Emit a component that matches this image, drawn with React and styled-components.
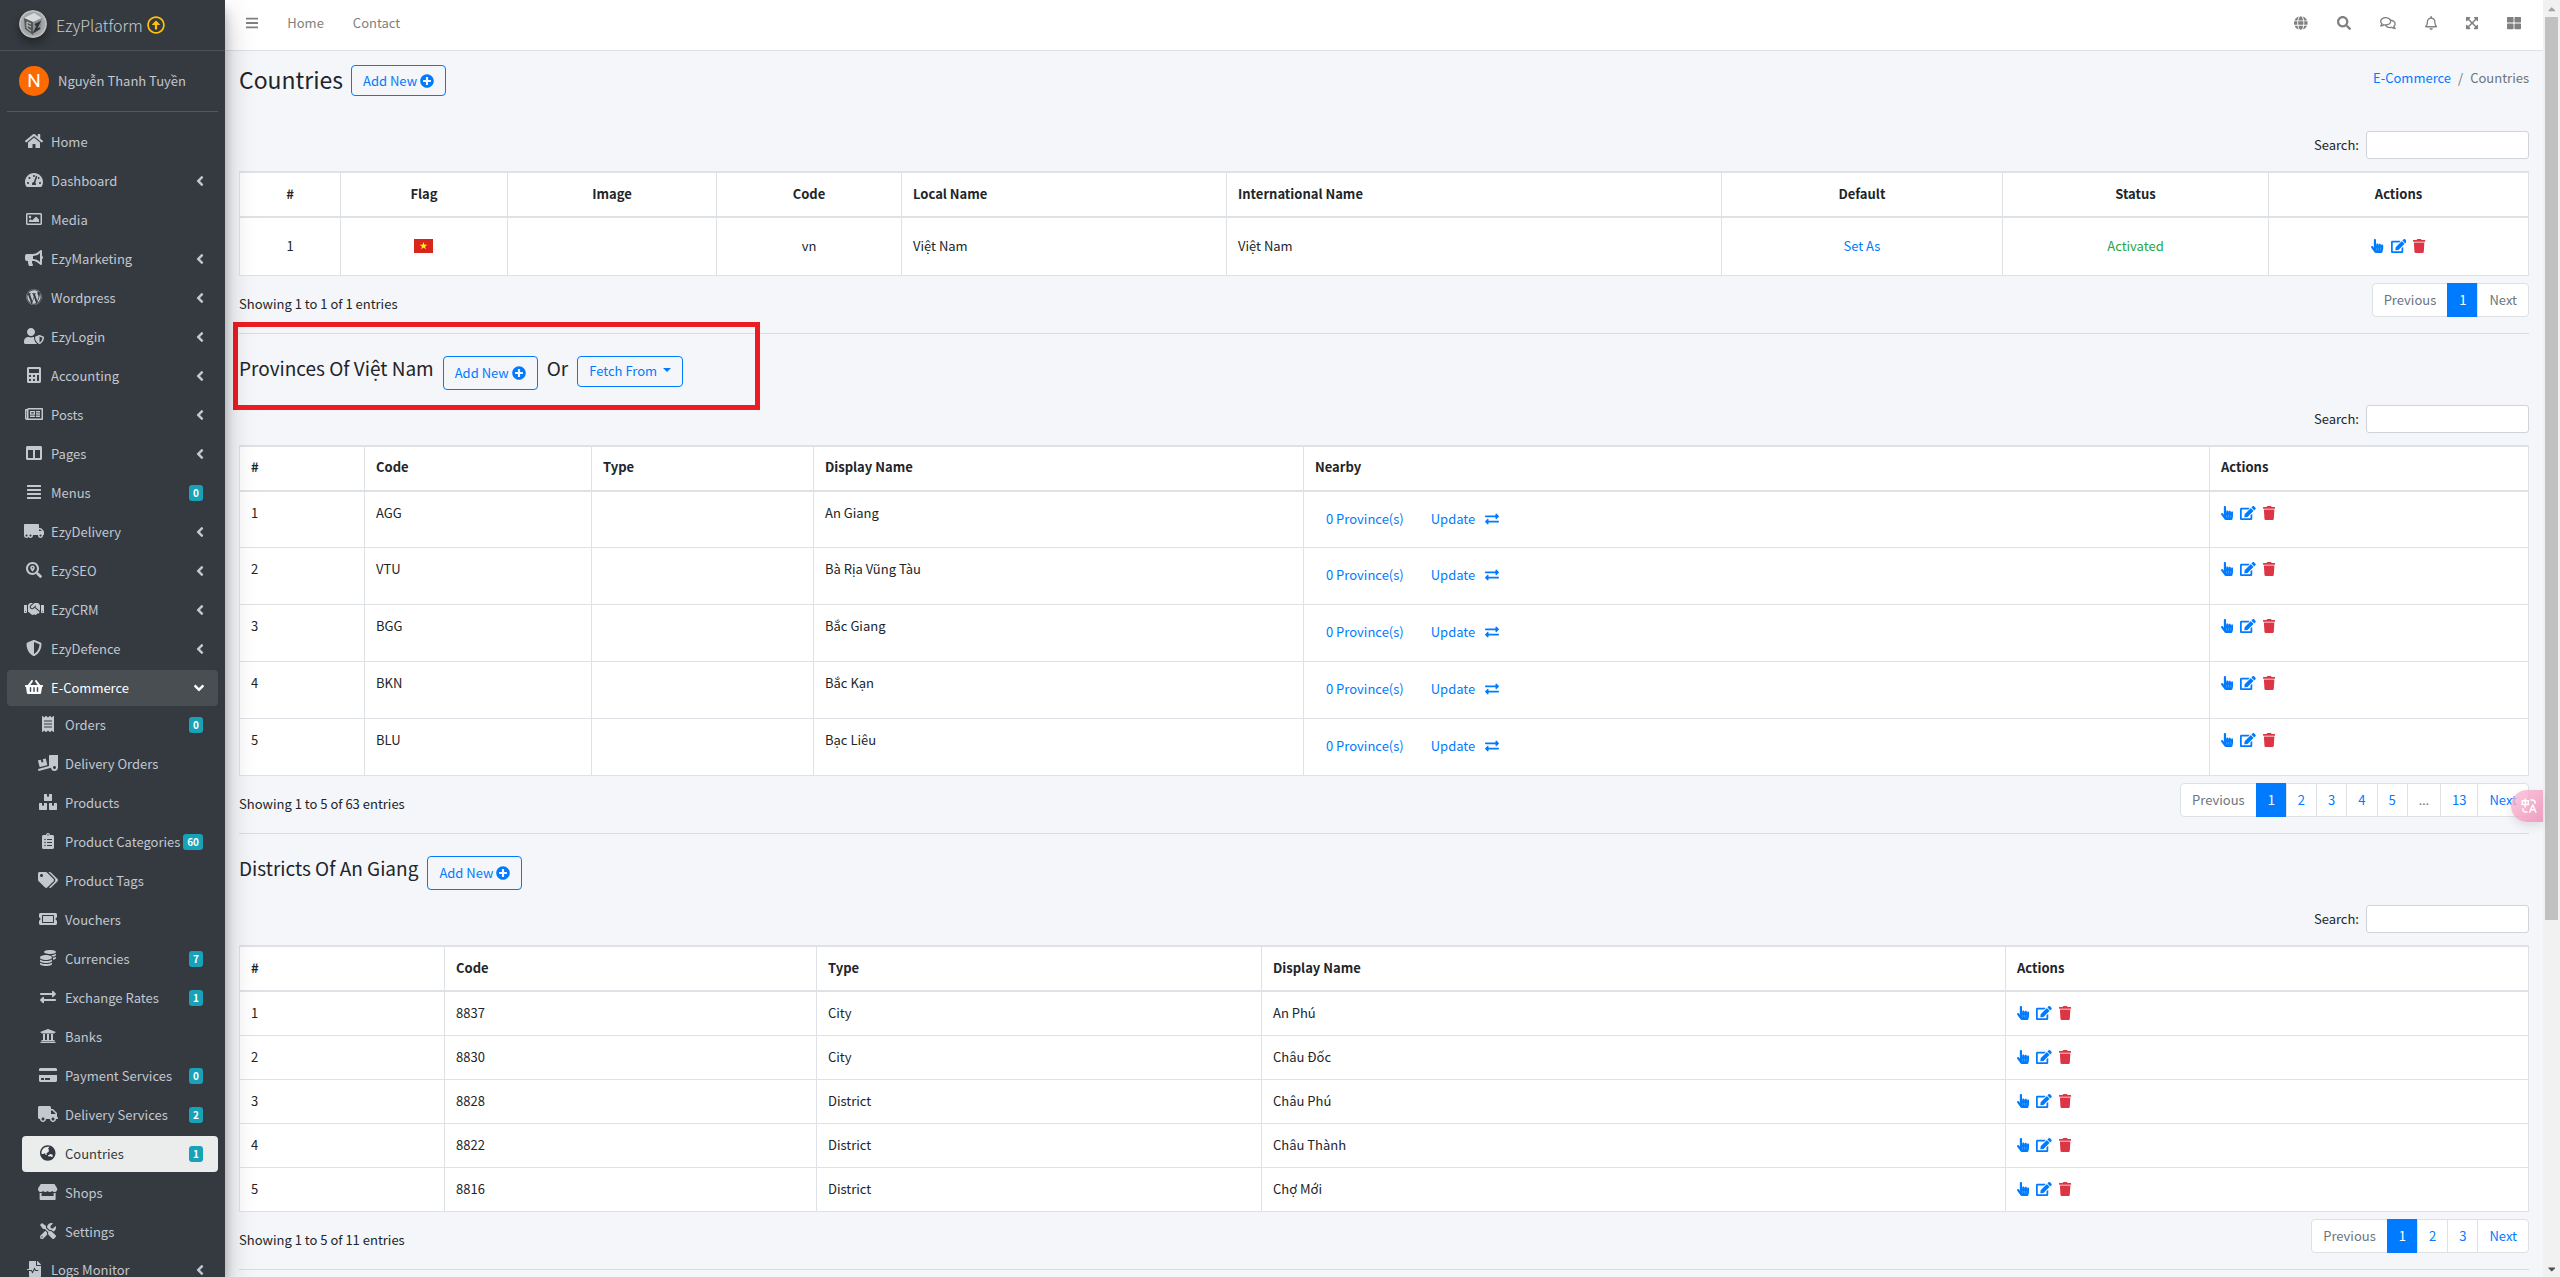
import React from "react";
import styled, { createGlobalStyle, css } from "styled-components";
import { IconContext } from "react-icons";
import {
  FaAlignJustify,
  FaAngleDown,
  FaAngleLeft,
  FaBars,
  FaBoxes,
  FaBullhorn,
  FaCalculator,
  FaCaretDown,
  FaCaretUp,
  FaClipboardList,
  FaCoins,
  FaColumns,
  FaCreditCard,
  FaEdit,
  FaExchangeAlt,
  FaExpandArrowsAlt,
  FaFileMedicalAlt,
  FaGlobe,
  FaGlobeAsia,
  FaHandPointer,
  FaHandshake,
  FaHome,
  FaPlusCircle,
  FaReceipt,
  FaRegArrowAltCircleUp,
  FaRegBell,
  FaRegComments,
  FaRegImage,
  FaRegNewspaper,
  FaSearch,
  FaSearchLocation,
  FaShieldAlt,
  FaShoppingBasket,
  FaStore,
  FaTachometerAlt,
  FaTags,
  FaThLarge,
  FaTicketAlt,
  FaTools,
  FaTrash,
  FaTruck,
  FaTruckLoading,
  FaTruckMoving,
  FaUniversity,
  FaUserShield,
  FaWordpress,
} from "react-icons/fa";
import { RiTranslate } from "react-icons/ri";

const GlobalStyle = createGlobalStyle`
  *, *::before, *::after {
    box-sizing: border-box;
  }

  html, body {
    margin: 0;
    height: 100%;
    overflow: hidden;
  }

  body {
    font-family: "Noto Sans CJK SC", "Noto Sans", sans-serif;
    font-size: 13px;
    line-height: 22px;
    color: #212529;
    background: #f4f6f9;
  }

  a {
    color: #007bff;
    text-decoration: none;
  }

  button, input {
    font: inherit;
  }

  /* wide icons keep their own aspect ratio */
  .icon {
    flex: none;
    width: auto;
    height: 1em;
  }
`;

const Page = styled.div`
  display: flex;
  height: 100vh;
  overflow: hidden;
`;

/* ---------- sidebar ---------- */

const Sidebar = styled.aside`
  position: relative;
  z-index: 2;
  flex: 0 0 225px;
  overflow: hidden;
  background: #343a40;
  box-shadow: 0 14px 28px rgba(0, 0, 0, 0.25), 0 10px 10px rgba(0, 0, 0, 0.22);
`;

const Brand = styled.a`
  display: flex;
  align-items: center;
  height: 51px;
  padding-left: 19px;
  border-bottom: 1px solid #4b545c;
  color: #c9cccf;
  font-size: 16px;
  font-weight: 300;

  svg:first-child {
    margin: 0 9px 3px 0;
    border-radius: 50%;
    box-shadow: 0 5px 9px rgba(0, 0, 0, 0.35);
  }

  svg:last-child {
    margin-left: 4px;
    color: #ffc107;
    font-size: 18px;
  }
`;

const UserPanel = styled.div`
  display: flex;
  align-items: center;
  gap: 9px;
  height: 61px;
  margin: 0 7px 12px;
  padding-left: 12px;
  border-bottom: 1px solid #4f5962;

  a {
    color: #c2c7d0;
  }
`;

const Avatar = styled.span`
  width: 30px;
  height: 30px;
  border-radius: 50%;
  background: #ff6a00;
  color: #fff;
  font-family: Roboto, sans-serif;
  font-size: 19px;
  line-height: 30px;
  text-align: center;
`;

const NavList = styled.ul`
  margin: 0;
  padding: 0 7px;
  list-style: none;
`;

const SubNav = styled.ul`
  margin: -2px 0 -1px;
  padding: 0 0 0 15px;
  list-style: none;
`;

const NavLink = styled.a`
  display: flex;
  align-items: center;
  height: 36px;
  margin-bottom: 3px;
  padding: 0 14px 0 ${(p) => (p.$nested ? "12px" : "13px")};
  border-radius: 4px;
  color: #c2c7d0;
  white-space: nowrap;

  > svg {
    font-size: 16px;
  }

  ${(p) => p.$open && css`
    background: #494e52;
    color: #fff;
  `}

  ${(p) => p.$active && css`
    background: #ebedec;
    color: #343a40;
  `}
`;

const NavIcon = styled.span`
  display: flex;
  justify-content: center;
  flex: 0 0 28px;
  margin-right: 3px;
  padding-bottom: 2px;
  font-size: 16px;
`;

const NavText = styled.span`
  flex: 1;
`;

const Badge = styled.span`
  min-width: 14px;
  height: 16px;
  margin-right: 1px;
  padding: 0 4px;
  border-radius: 3px;
  background: #17a2b8;
  color: #fff;
  font-size: 10px;
  font-weight: 700;
  line-height: 16px;
`;

/* ---------- main area ---------- */

const Main = styled.div`
  flex: 1;
  min-width: 0;
`;

const Topbar = styled.header`
  display: flex;
  align-items: center;
  justify-content: space-between;
  height: 51px;
  padding: 0 22px 4px 21px;
  border-bottom: 1px solid #dee2e6;
  background: #fff;
`;

const TopLinks = styled.nav`
  display: flex;
  align-items: center;
  gap: 29px;

  a {
    display: flex;
    color: #808080;
  }

  svg {
    font-size: 14px;
  }
`;

const Content = styled.main`
  padding: 0 14px;
`;

const TitleRow = styled.div`
  display: flex;
  align-items: center;
  justify-content: space-between;
  height: 59px;
  margin-bottom: 21px;
`;

const Heading = styled.div`
  display: flex;
  align-items: center;
  gap: 8px;
`;

const PageTitle = styled.h1`
  margin: 0 0 3px;
  font-size: 23px;
  font-weight: 400;
  line-height: 30px;
`;

const SectionHead = styled.div`
  display: flex;
  align-items: flex-start;
  gap: 9px;
  height: 71px;
  padding-top: 22px;
`;

const SectionTitle = styled.h2`
  margin: 0;
  font-size: 19px;
  font-weight: 400;
  line-height: 24px;
`;

const OutlineButton = styled.button`
  display: flex;
  align-items: center;
  gap: 3px;
  height: ${(p) => (p.$tall ? "34px" : "31px")};
  padding: 0 11px;
  border: 1px solid #007bff;
  border-radius: 4px;
  background: transparent;
  color: #007bff;
  cursor: pointer;

  svg {
    font-size: 14px;
  }
`;

const Caret = styled.i`
  margin: 0 0 3px 3px;
  border-top: 4px solid currentColor;
  border-right: 4px solid transparent;
  border-left: 4px solid transparent;
`;

const Breadcrumb = styled.nav`
  display: flex;
  gap: 7px;
  padding-bottom: 5px;
  color: #6c757d;
`;

const SearchRow = styled.label`
  display: flex;
  align-items: center;
  justify-content: flex-end;
  gap: 7px;
  margin-bottom: 12px;
`;

const SearchInput = styled.input`
  width: 163px;
  height: 28px;
  padding: 3px 7px;
  border: 1px solid #ced4da;
  border-radius: 3px;
  background: #fff;
`;

const Table = styled.table`
  width: 100%;
  table-layout: fixed;
  border-collapse: collapse;
  background: #fff;

  th, td {
    height: ${(p) => p.$rowHeight}px;
    padding: 10px 11px 11px;
    border: 1px solid #dee2e6;
    text-align: left;
    vertical-align: ${(p) => (p.$middle ? "middle" : "top")};
  }

  th {
    height: 45px;
    padding: 9px 11px 11px;
    border-top-width: 2px;
    border-bottom-width: 2px;
    font-weight: 700;
    vertical-align: middle;
  }

  th.center, td.center {
    text-align: center;
  }
`;

const Flag = styled.svg`
  display: block;
  margin: 0 auto;
`;

const ActionGroup = styled.span`
  display: inline-flex;
  align-items: center;
  gap: 7px;
  height: 22px;
  vertical-align: top;
`;

const IconButton = styled.button`
  display: flex;
  padding: 0;
  border: 0;
  background: none;
  color: ${(p) => (p.$danger ? "#dc3545" : "#007bff")};
  font-size: 14px;
  cursor: pointer;
`;

const NearbyLinks = styled.div`
  display: flex;
  gap: 27px;
  padding: 6px 11px;

  a {
    display: flex;
    align-items: center;
    gap: 10px;
  }

  svg {
    font-size: 14px;
  }
`;

const Status = styled.span`
  color: #28a745;
`;

const TableFooter = styled.div`
  display: flex;
  justify-content: space-between;
  height: 58px;
  padding-top: 7px;
  border-bottom: 1px solid #dadce0;
`;

const Info = styled.div`
  padding-top: 10px;
`;

const Pager = styled.ul`
  display: flex;
  height: 34px;
  margin: 0;
  padding: 0;
  list-style: none;

  li + li {
    margin-left: -1px;
  }

  li:first-child button {
    border-radius: 4px 0 0 4px;
  }

  li:last-child button {
    border-radius: 0 4px 4px 0;
  }
`;

const PageButton = styled.button`
  height: 34px;
  padding: 0 11px;
  border: 1px solid ${(p) => (p.$current ? "#007bff" : "#dee2e6")};
  background: ${(p) => (p.$current ? "#007bff" : "#fff")};
  color: ${(p) => (p.$current ? "#fff" : "#007bff")};
  cursor: pointer;

  &:disabled {
    color: #6c757d;
  }

  ${(p) => p.$ellipsis && css`
    font-family: "Noto Sans", sans-serif;
  `}
`;

/* ---------- overlays ---------- */

const Section = styled.section`
  position: relative;
`;

const Highlight = styled.div`
  position: absolute;
  top: -12px;
  left: -6px;
  width: 527px;
  height: 88px;
  border: 5px solid #ed1c24;
  pointer-events: none;
`;

const TranslateTab = styled.button`
  position: absolute;
  top: 790px;
  right: 17px;
  z-index: 3;
  display: flex;
  align-items: center;
  width: 32px;
  height: 32px;
  padding: 0 0 0 9px;
  border: 0;
  border-radius: 16px 0 0 16px;
  background: linear-gradient(135deg, rgba(252, 185, 211, 0.75), rgba(238, 148, 187, 0.9));
  box-shadow: 0 4px 10px rgba(0, 0, 0, 0.1);
  color: #fff;
  font-size: 18px;
`;

const ScrollTrack = styled.div`
  display: flex;
  flex-direction: column;
  align-items: center;
  flex: 0 0 17px;
  background: #f1f1f1;
`;

const ScrollArrow = styled.span`
  display: flex;
  align-items: center;
  flex: 0 0 17px;
  color: ${(p) => (p.$idle ? "#a3a3a3" : "#505050")};
  font-size: 12px;
`;

const ScrollThumb = styled.div`
  flex: 0 1 903px;
  width: 13px;
  margin-bottom: auto;
  background: #c1c1c1;
`;

const navItems = [
  { icon: FaHome, text: "Home" },
  { icon: FaTachometerAlt, text: "Dashboard", arrow: true },
  { icon: FaRegImage, text: "Media" },
  { icon: FaBullhorn, text: "EzyMarketing", arrow: true },
  { icon: FaWordpress, text: "Wordpress", arrow: true },
  { icon: FaUserShield, text: "EzyLogin", arrow: true },
  { icon: FaCalculator, text: "Accounting", arrow: true },
  { icon: FaRegNewspaper, text: "Posts", arrow: true },
  { icon: FaColumns, text: "Pages", arrow: true },
  { icon: FaAlignJustify, text: "Menus", badge: 0 },
  { icon: FaTruckMoving, text: "EzyDelivery", arrow: true },
  { icon: FaSearchLocation, text: "EzySEO", arrow: true },
  { icon: FaHandshake, text: "EzyCRM", arrow: true },
  { icon: FaShieldAlt, text: "EzyDefence", arrow: true },
  {
    icon: FaShoppingBasket,
    text: "E-Commerce",
    children: [
      { icon: FaReceipt, text: "Orders", badge: 0 },
      { icon: FaTruckLoading, text: "Delivery Orders" },
      { icon: FaBoxes, text: "Products" },
      { icon: FaClipboardList, text: "Product Categories", badge: 60 },
      { icon: FaTags, text: "Product Tags" },
      { icon: FaTicketAlt, text: "Vouchers" },
      { icon: FaCoins, text: "Currencies", badge: 7 },
      { icon: FaExchangeAlt, text: "Exchange Rates", badge: 1 },
      { icon: FaUniversity, text: "Banks" },
      { icon: FaCreditCard, text: "Payment Services", badge: 0 },
      { icon: FaTruck, text: "Delivery Services", badge: 2 },
      { icon: FaGlobeAsia, text: "Countries", badge: 1, active: true },
      { icon: FaStore, text: "Shops" },
      { icon: FaTools, text: "Settings" },
    ],
  },
  { icon: FaFileMedicalAlt, text: "Logs Monitor", arrow: true },
];

const topIcons = [
  { icon: FaGlobe, label: "Language" },
  { icon: FaSearch, label: "Search" },
  { icon: FaRegComments, label: "Messages" },
  { icon: FaRegBell, label: "Notifications" },
  { icon: FaExpandArrowsAlt, label: "Fullscreen" },
  { icon: FaThLarge, label: "Control panel" },
];

// column widths are relative, DataTable turns them into percentages
const countryColumns = [
  { name: "#", width: 101, center: true },
  { name: "Flag", width: 167, center: true },
  { name: "Image", width: 209, center: true },
  { name: "Code", width: 185, center: true },
  { name: "Local Name", width: 325 },
  { name: "International Name", width: 495 },
  { name: "Default", width: 281, center: true },
  { name: "Status", width: 266, center: true },
  { name: "Actions", width: 260, center: true },
];

const provinceColumns = [
  { name: "#", width: 125 },
  { name: "Code", width: 227 },
  { name: "Type", width: 222 },
  { name: "Display Name", width: 490 },
  { name: "Nearby", width: 906 },
  { name: "Actions", width: 319 },
];

const districtColumns = [
  { name: "#", width: 205 },
  { name: "Code", width: 372 },
  { name: "Type", width: 445 },
  { name: "Display Name", width: 744 },
  { name: "Actions", width: 523 },
];

const provinces = [
  ["AGG", "An Giang"],
  ["VTU", "Bà Rịa Vũng Tàu"],
  ["BGG", "Bắc Giang"],
  ["BKN", "Bắc Kạn"],
  ["BLU", "Bạc Liêu"],
];

const districts = [
  ["8837", "City", "An Phú"],
  ["8830", "City", "Châu Đốc"],
  ["8828", "District", "Châu Phú"],
  ["8822", "District", "Châu Thành"],
  ["8816", "District", "Chợ Mới"],
];

const BrandLogo = () => (
  <svg width="28" height="28" viewBox="0 0 28 28">
    <circle cx="14" cy="14" r="14" fill="#b9bbbc" />
    <circle cx="14" cy="14" r="12" fill="#a3a5a6" />
    <path d="M5 8 L15 3 L23 8 L14 12 Z" fill="#d8dadb" />
    <path d="M5 8 L14 12 L14 25 L6 19 Z" fill="#55585b" />
    <path d="M23 8 L14 12 L14 25 L22 19 Z" fill="#8b8e90" />
    <path d="M8 12 L12 14 M8 12 V18 L12 21 M8 15 L12 17" stroke="#c8cacb" fill="none" />
    <path d="M16 15 L20 13 L16 21 L21 18" stroke="#303336" strokeWidth="2" fill="none" />
  </svg>
);

const SideLink = ({ item, nested }) => {
  const Icon = item.icon;
  return (
    <NavLink href="#" $nested={nested} $open={!!item.children} $active={item.active}>
      <NavIcon>
        <Icon />
      </NavIcon>
      <NavText>{item.text}</NavText>
      {item.badge !== undefined && <Badge>{item.badge}</Badge>}
      {item.arrow && <FaAngleLeft />}
      {item.children && <FaAngleDown />}
    </NavLink>
  );
};

const SideNav = () => (
  <NavList>
    {navItems.map((item) => (
      <li key={item.text}>
        <SideLink item={item} />
        {item.children && (
          <SubNav>
            {item.children.map((child) => (
              <li key={child.text}>
                <SideLink item={child} nested />
              </li>
            ))}
          </SubNav>
        )}
      </li>
    ))}
  </NavList>
);

const AddNew = ({ tall }) => (
  <OutlineButton type="button" $tall={tall}>
    Add New <FaPlusCircle />
  </OutlineButton>
);

const Actions = () => (
  <ActionGroup>
    <IconButton type="button" aria-label="Select">
      <FaHandPointer />
    </IconButton>
    <IconButton type="button" aria-label="Edit">
      <FaEdit />
    </IconButton>
    <IconButton type="button" aria-label="Delete" $danger>
      <FaTrash />
    </IconButton>
  </ActionGroup>
);

const Search = ({ id }) => (
  <SearchRow htmlFor={id}>
    Search:
    <SearchInput id={id} type="search" />
  </SearchRow>
);

const DataTable = ({ columns, children, ...rest }) => {
  const total = columns.reduce((sum, c) => sum + c.width, 0);
  return (
    <Table {...rest}>
      <colgroup>
        {columns.map((c) => (
          <col key={c.name} style={{ width: `${(c.width / total) * 100}%` }} />
        ))}
      </colgroup>
      <thead>
        <tr>
          {columns.map((c) => (
            <th key={c.name} className={c.center ? "center" : undefined}>
              {c.name}
            </th>
          ))}
        </tr>
      </thead>
      <tbody>{children}</tbody>
    </Table>
  );
};

const Footer = ({ info, pages, last }) => (
  <TableFooter>
    <Info>{info}</Info>
    <Pager>
      <li>
        <PageButton type="button" disabled>
          Previous
        </PageButton>
      </li>
      {pages.map((page) => (
        <li key={page}>
          <PageButton
            type="button"
            $current={page === "1"}
            $ellipsis={page === "…"}
            disabled={page === "…"}
          >
            {page}
          </PageButton>
        </li>
      ))}
      <li>
        <PageButton type="button" disabled={last}>
          Next
        </PageButton>
      </li>
    </Pager>
  </TableFooter>
);

const Countries = () => (
  <section>
    <TitleRow>
      <Heading>
        <PageTitle>Countries</PageTitle>
        <AddNew />
      </Heading>
      <Breadcrumb>
        <a href="#">E-Commerce</a>
        <span>/</span>
        <span>Countries</span>
      </Breadcrumb>
    </TitleRow>
    <Search id="country-search" />
    <DataTable columns={countryColumns} $rowHeight={58} $middle>
      <tr>
        <td className="center">1</td>
        <td>
          <Flag width="19" height="14" viewBox="0 0 19 14">
            <rect width="19" height="14" fill="#da251d" />
            <path
              d="M9.5 3 L10.4 5.8 H13.3 L11 7.5 L11.9 10.3 L9.5 8.6 L7.1 10.3 L8 7.5 L5.7 5.8 H8.6 Z"
              fill="#ff0"
            />
          </Flag>
        </td>
        <td />
        <td className="center">vn</td>
        <td>Việt Nam</td>
        <td>Việt Nam</td>
        <td className="center">
          <a href="#">Set As</a>
        </td>
        <td className="center">
          <Status>Activated</Status>
        </td>
        <td className="center">
          <Actions />
        </td>
      </tr>
    </DataTable>
    <Footer info="Showing 1 to 1 of 1 entries" pages={["1"]} last />
  </section>
);

const Provinces = () => (
  <Section>
    <Highlight />
    <SectionHead>
      <SectionTitle>Provinces Of Việt Nam</SectionTitle>
      <AddNew tall />
      <SectionTitle>Or</SectionTitle>
      <OutlineButton type="button">
        Fetch From <Caret />
      </OutlineButton>
    </SectionHead>
    <Search id="province-search" />
    <DataTable columns={provinceColumns} $rowHeight={57}>
      {provinces.map(([code, name], i) => (
        <tr key={code}>
          <td>{i + 1}</td>
          <td>{code}</td>
          <td />
          <td>{name}</td>
          <td>
            <NearbyLinks>
              <a href="#">0 Province(s)</a>
              <a href="#">
                Update <FaExchangeAlt />
              </a>
            </NearbyLinks>
          </td>
          <td>
            <Actions />
          </td>
        </tr>
      ))}
    </DataTable>
    <Footer
      info="Showing 1 to 5 of 63 entries"
      pages={["1", "2", "3", "4", "5", "…", "13"]}
    />
  </Section>
);

const Districts = () => (
  <Section>
    <SectionHead>
      <SectionTitle>Districts Of An Giang</SectionTitle>
      <AddNew tall />
    </SectionHead>
    <Search id="district-search" />
    <DataTable columns={districtColumns} $rowHeight={44}>
      {districts.map(([code, type, name], i) => (
        <tr key={code}>
          <td>{i + 1}</td>
          <td>{code}</td>
          <td>{type}</td>
          <td>{name}</td>
          <td>
            <Actions />
          </td>
        </tr>
      ))}
    </DataTable>
    <Footer info="Showing 1 to 5 of 11 entries" pages={["1", "2", "3"]} />
  </Section>
);

const App = () => (
  <IconContext.Provider value={{ size: "auto", className: "icon" }}>
    <GlobalStyle />
    <Page>
      <Sidebar>
        <Brand href="#">
          <BrandLogo />
          EzyPlatform
          <FaRegArrowAltCircleUp />
        </Brand>
        <UserPanel>
          <Avatar>N</Avatar>
          <a href="#">Nguyễn Thanh Tuyền</a>
        </UserPanel>
        <SideNav />
      </Sidebar>
      <Main>
        <Topbar>
          <TopLinks>
            <a href="#" aria-label="Toggle menu">
              <FaBars />
            </a>
            <a href="#">Home</a>
            <a href="#">Contact</a>
          </TopLinks>
          <TopLinks>
            {topIcons.map(({ icon: Icon, label }) => (
              <a key={label} href="#" aria-label={label}>
                <Icon />
              </a>
            ))}
          </TopLinks>
        </Topbar>
        <Content>
          <Countries />
          <Provinces />
          <Districts />
        </Content>
      </Main>
      <ScrollTrack>
        <ScrollArrow $idle>
          <FaCaretUp />
        </ScrollArrow>
        <ScrollThumb />
        <ScrollArrow>
          <FaCaretDown />
        </ScrollArrow>
      </ScrollTrack>
    </Page>
    <TranslateTab type="button" aria-label="Translate">
      <RiTranslate />
    </TranslateTab>
  </IconContext.Provider>
);

export default App;
